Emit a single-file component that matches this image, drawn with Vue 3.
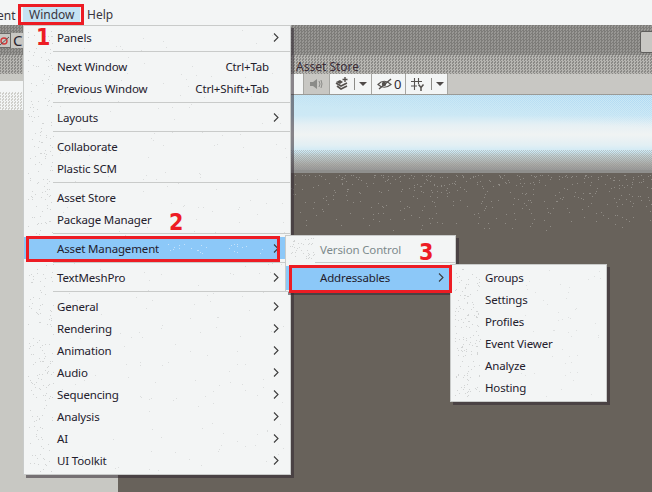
<template>
  <div class="screen">
    <header class="menubar">
      <span class="clipped">ent</span>
      <span class="top-item active">Window</span>
      <span class="top-item">Help</span>
    </header>

    <div class="main-toolbar">
      <div class="pivot-group">
        <div class="pivot-btn">
          <svg width="10" height="12" viewBox="0 0 10 12">
            <circle cx="4" cy="6" r="3" fill="none" stroke="#d23a3a" stroke-width="1.4" />
            <path d="M0 10 9 2" stroke="#555" stroke-width="1" />
          </svg>
        </div>
        <span class="pivot-label">C</span>
      </div>
      <div class="account-btn"></div>
    </div>

    <div class="tabstrip">
      <span class="tab-label">Asset Store</span>
    </div>

    <div class="workspace">
      <aside class="side-panel">
        <div class="side-head"></div>
        <div class="side-search"></div>
        <div class="side-dither"></div>
      </aside>
      <section class="scene">
        <div class="scene-toolbar">
          <div class="tool white w1"></div>
          <div class="tool grey w2">
            <svg width="14" height="12" viewBox="0 0 14 12">
              <path d="M1 4h3l4-3v10L4 8H1z" fill="#8b8b88" />
              <path d="M10 3q2 3 0 6M12 2q2 4 0 8" fill="none" stroke="#8b8b88" />
            </svg>
          </div>
          <div class="tool white w3">
            <svg width="14" height="14" viewBox="0 0 14 14">
              <path d="M1 6l5 3 6-3M2 9l4 3 6-3" fill="none" stroke="#55514e" stroke-width="1.6" />
              <path d="M1 5l4-2 3 2-3 2z" fill="#55514e" />
              <path d="M10 0v5M7.500 2.500h5" stroke="#55514e" stroke-width="1.4" />
            </svg>
            <i class="divider"></i>
            <i class="caret"></i>
          </div>
          <div class="tool white w4">
            <svg width="15" height="12" viewBox="0 0 15 12">
              <path d="M1 6.500Q7 0 14 6.500 7 12 1 6.500z" fill="none" stroke="#55514e" stroke-width="1.2" />
              <circle cx="7" cy="6" r="2.200" fill="#55514e" />
              <path d="M2 11 14 1" stroke="#55514e" stroke-width="1.4" />
            </svg>
            <span class="count">0</span>
          </div>
          <div class="tool white w5">
            <svg width="14" height="14" viewBox="0 0 14 14">
              <path d="M3.500 1v12M7.500 1v6M0 4.500h11M0 9h6" fill="none" stroke="#55514e" stroke-width="1.1" />
              <path d="M7.500 7.500l2.500 3 2.500-3M10 10.500V14" fill="none" stroke="#55514e" stroke-width="1.5" />
            </svg>
            <i class="divider"></i>
            <i class="caret"></i>
          </div>
        </div>
        <div class="sky">
          <div class="sky-blue"></div>
          <div class="sky-grey"></div>
        </div>
        <div class="horizon"></div>
        <div class="ground">
          <svg class="specks" width="534" height="60">
            <path :d="groundDots" stroke="#8f8b85" />
          </svg>
        </div>
      </section>
    </div>

    <nav class="menu main-menu">
      <svg class="specks" width="266" height="448">
        <path :d="mainGutter" stroke="#d2d4d4" />
        <path :d="mainBody" stroke="#dcdede" />
      </svg>
      <template v-for="(item, i) in mainMenu" :key="i">
        <div v-if="item.sep" class="sep"></div>
        <div v-else class="row" :class="{ selected: item.selected }">
          <svg v-if="item.selected" class="specks" width="266" height="22">
            <path :d="selectedDots" stroke="#c4e2fb" />
          </svg>
          <span class="label">{{ item.label }}</span>
          <span v-if="item.shortcut" class="shortcut">{{ item.shortcut }}</span>
          <svg v-if="item.sub" class="chevron" width="6" height="9" viewBox="0 0 6 9">
            <path d="M1 .5 5 4.500 1 8.500" fill="none" stroke="#3c3c3c" stroke-width="1.1" />
          </svg>
        </div>
      </template>
    </nav>

    <nav class="menu sub-menu">
      <svg class="specks" width="169" height="55">
        <path :d="subGutter" stroke="#d2d4d4" />
      </svg>
      <div class="row disabled"><span class="label">Version Control</span></div>
      <div class="sep"></div>
      <div class="row selected">
        <span class="label">Addressables</span>
        <svg class="chevron" width="6" height="9" viewBox="0 0 6 9">
          <path d="M1 .5 5 4.500 1 8.500" fill="none" stroke="#3c3c3c" stroke-width="1.1" />
        </svg>
      </div>
    </nav>

    <nav class="menu leaf-menu">
      <svg class="specks" width="155" height="136">
        <path :d="leafGutter" stroke="#d2d4d4" />
        <path :d="leafBody" stroke="#dfe1e1" />
      </svg>
      <div v-for="name in addressables" :key="name" class="row">
        <span class="label">{{ name }}</span>
      </div>
    </nav>

    <div class="callout box-window"></div>
    <div class="callout box-asset"></div>
    <div class="callout box-addr"></div>
    <span class="step step-1">1</span>
    <span class="step step-2">2</span>
    <span class="step step-3">3</span>
  </div>
</template>

<script setup>
const groups = [
  [{ label: "Panels", sub: true }],
  [
    { label: "Next Window", shortcut: "Ctrl+Tab" },
    { label: "Previous Window", shortcut: "Ctrl+Shift+Tab" },
  ],
  [{ label: "Layouts", sub: true }],
  [{ label: "Collaborate" }, { label: "Plastic SCM" }],
  [{ label: "Asset Store" }, { label: "Package Manager" }],
  [{ label: "Asset Management", sub: true, selected: true }],
  [{ label: "TextMeshPro", sub: true }],
  [
    { label: "General", sub: true },
    { label: "Rendering", sub: true },
    { label: "Animation", sub: true },
    { label: "Audio", sub: true },
    { label: "Sequencing", sub: true },
    { label: "Analysis", sub: true },
    { label: "AI", sub: true },
    { label: "UI Toolkit", sub: true },
  ],
];

// flatten the groups and put a separator between each of them
const mainMenu = groups.flatMap((g, i) => (i ? [{ sep: true }, ...g] : g));

const addressables = ["Groups", "Settings", "Profiles", "Event Viewer", "Analyze", "Hosting"];

// the screenshot is a dithered gif, these paths fake its stray pixels
function dots(seed, count, x0, x1, y0, y1, skew = 1) {
  let s = seed;
  const next = () => {
    s = (s * 16807) % 2147483647;
    return s / 2147483647;
  };
  let d = "";
  for (let i = 0; i < count; i++) {
    const x = Math.round(x0 + next() * (x1 - x0));
    const y = Math.round(y0 + Math.pow(next(), skew) * (y1 - y0)) + 0.5;
    d += `M${x} ${y}h1`;
  }
  return d;
}

const groundDots = dots(71, 420, 172, 534, 2, 58, 1.9);
const mainGutter = dots(11, 330, 4, 29, 2, 446);
const mainBody = dots(23, 260, 34, 262, 4, 444);
const selectedDots = dots(37, 26, 135, 240, 6, 16);
const subGutter = dots(41, 40, 4, 29, 2, 22);
const leafGutter = dots(53, 150, 4, 29, 2, 134);
const leafBody = dots(67, 50, 70, 150, 4, 132);
</script>

<style>
html,
body {
  margin: 0;
  background: #f3f5f5;
}
</style>

<style scoped>
.screen {
  position: relative;
  width: 652px;
  height: 492px;
  overflow: hidden;
  display: flex;
  flex-direction: column;
  background: #f3f5f5;
  font-family: "Noto Sans", "Open Sans", sans-serif;
  font-size: 12px;
  color: #23202c;
}

.menubar {
  height: 25px;
  flex: none;
  display: flex;
  align-items: center;
  padding-top: 5px;
  box-sizing: border-box;
  background: #f3f5f5;
}

.clipped {
  width: 20px;
  margin-left: -3px;
  padding-right: 6px;
  color: #3a3640;
}

.top-item {
  height: 17px;
  line-height: 17px;
  padding: 0 7px;
  margin-top: -1px;
  color: #3a3640;
}

.top-item.active {
  width: 57px;
  padding: 0 6px;
  box-sizing: border-box;
  background: #c5e3f3;
}

.main-toolbar {
  height: 30px;
  flex: none;
  display: flex;
  align-items: flex-start;
  background: repeating-conic-gradient(#7d7c79 0 25%, #989794 0 50%) 0 0 / 3px 3px;
}

.pivot-group {
  width: 23px;
  height: 15px;
  margin-top: 8px;
  display: flex;
  align-items: center;
  background: #c8c7c3;
}

.pivot-btn {
  width: 10px;
  height: 13px;
  display: flex;
  align-items: center;
  justify-content: center;
  border: 1px solid #6b6a67;
  border-left: 0;
}

.pivot-label {
  margin-left: 2px;
  font-size: 15px;
  line-height: 15px;
  color: #2a2530;
}

.account-btn {
  width: 14px;
  height: 20px;
  margin: 6px -4px 0 auto;
  background: #c8c7c3;
  border: 1px solid #5f5e5c;
  border-radius: 2px;
}

.tabstrip {
  height: 19px;
  flex: none;
  display: flex;
  align-items: center;
  padding: 3px 0 0 296px;
  box-sizing: border-box;
  background: repeating-conic-gradient(#b7b6b2 0 25%, #8b8a87 0 50%) 0 0 / 3px 3px;
}

.tab-label {
  color: #3a2c36;
}

.workspace {
  flex: 1;
  min-height: 0;
  display: flex;
}

.side-panel {
  width: 118px;
  flex: none;
  background: #c8c8c3;
}

.side-head {
  height: 7px;
}

.side-search {
  height: 11px;
  background: #f3f5f5;
}

.side-dither {
  height: 18px;
  background: repeating-conic-gradient(#f3f5f5 0 25%, #cfcfcb 0 50%) 0 0 / 3px 3px;
}

.scene {
  flex: 1;
  min-width: 0;
  display: flex;
  flex-direction: column;
}

.scene-toolbar {
  height: 21px;
  flex: none;
  display: flex;
  background: #c8c7c3;
  padding-left: 172px;
  border-bottom: 1px solid #9a9a96;
  box-sizing: border-box;
}

.tool {
  display: flex;
  align-items: center;
  gap: 4px;
  box-sizing: border-box;
  border-right: 1px solid #a6a6a2;
  padding-left: 5px;
}

.tool.white {
  background: #f3f5f5;
}

.tool.grey {
  background: #c8c7c3;
}

.w1 {
  width: 14px;
}
.w2 {
  width: 26px;
}
.w3 {
  width: 42px;
}
.w4 {
  width: 34px;
}
.w5 {
  width: 42px;
}

.w5 .divider {
  margin-left: 2px;
}

.divider {
  width: 1px;
  height: 12px;
  margin-left: 1px;
  background: #8c8c88;
}

.caret {
  width: 0;
  height: 0;
  border-left: 4px solid transparent;
  border-right: 4px solid transparent;
  border-top: 4px solid #4e4a48;
}

.count {
  margin-left: -2px;
  font-size: 13px;
  color: #2f2a34;
}

.sky {
  position: relative;
  height: 75px;
  flex: none;
  background: linear-gradient(#c9e7f4 0, #cde9f5 27%, #e6f0f4 40%, #f0f3f3 53%, #e2eff4 67%, #cde9f5 76%, #c4d4d8 80%, #aaaaa7 93%, #999 100%);
}

.sky-blue {
  position: absolute;
  inset: 0 0 auto 0;
  height: 34px;
  opacity: 0.65;
  background: repeating-conic-gradient(#9fd0f3 0 25%, transparent 0 50%) 0 0 / 2px 2px;
  -webkit-mask-image: linear-gradient(to bottom left, #000 0, transparent 50%);
  mask-image: linear-gradient(to bottom left, #000 0, transparent 50%);
}

.sky-grey {
  position: absolute;
  inset: auto 0 0 0;
  height: 20px;
  background: repeating-conic-gradient(#8f8f8b 0 25%, transparent 0 50%) 0 0 / 2px 2px;
  opacity: 0.4;
}

.horizon {
  height: 3px;
  flex: none;
  background: #8f8f8d;
}

.ground {
  position: relative;
  flex: 1;
  background: #68625b;
}

.specks {
  position: absolute;
  left: 0;
  top: 0;
  pointer-events: none;
}

.menu {
  position: absolute;
  box-sizing: border-box;
  background: #f3f5f5;
  border: 1px solid #c9cbca;
  box-shadow: 3px 3px 0 rgba(50, 40, 50, 0.55);
}

.main-menu {
  left: 23px;
  top: 25px;
  width: 268px;
  height: 450px;
}

.sub-menu {
  left: 285px;
  top: 235px;
  width: 171px;
  height: 57px;
  padding-top: 2px;
}

.sub-menu .sep {
  margin-top: 2px;
}

.sub-menu .row.selected {
  height: 24px;
  padding-bottom: 2px;
  box-sizing: border-box;
}

.leaf-menu {
  left: 450px;
  top: 264px;
  width: 157px;
  height: 138px;
  padding-top: 1px;
}

.row {
  position: relative;
  height: 22px;
  display: flex;
  align-items: center;
  padding-left: 33px;
  font-size: 11.5px;
  letter-spacing: -0.15px;
}

.sub-menu .row,
.leaf-menu .row {
  padding-left: 34px;
}

.row.selected {
  background: #8cc8f8;
}

.row.disabled {
  color: #7d8a8c;
}

.label {
  position: relative;
  white-space: nowrap;
}

.shortcut {
  position: relative;
  margin-left: auto;
  margin-right: 21px;
  white-space: nowrap;
}

.chevron {
  position: absolute;
  right: 11px;
  top: 7px;
}

.sep {
  position: relative;
  height: 1px;
  margin: 3px 0 3px 29px;
  background: #c9cbca;
}

.callout {
  position: absolute;
  box-sizing: border-box;
  border: 3px solid #ed1c24;
}

.box-window {
  left: 18px;
  top: 4px;
  width: 66px;
  height: 21px;
}

.box-asset {
  left: 26px;
  top: 236px;
  width: 254px;
  height: 26px;
}

.box-addr {
  left: 289px;
  top: 265px;
  width: 163px;
  height: 28px;
}

.step {
  position: absolute;
  font-family: "DejaVu Sans", sans-serif;
  font-stretch: condensed;
  font-weight: 700;
  font-size: 23px;
  line-height: 24px;
  color: #ed1c24;
}

.step-1 {
  left: 36px;
  top: 25px;
}

.step-2 {
  left: 169px;
  top: 210px;
}

.step-3 {
  left: 419px;
  top: 240px;
}
</style>
